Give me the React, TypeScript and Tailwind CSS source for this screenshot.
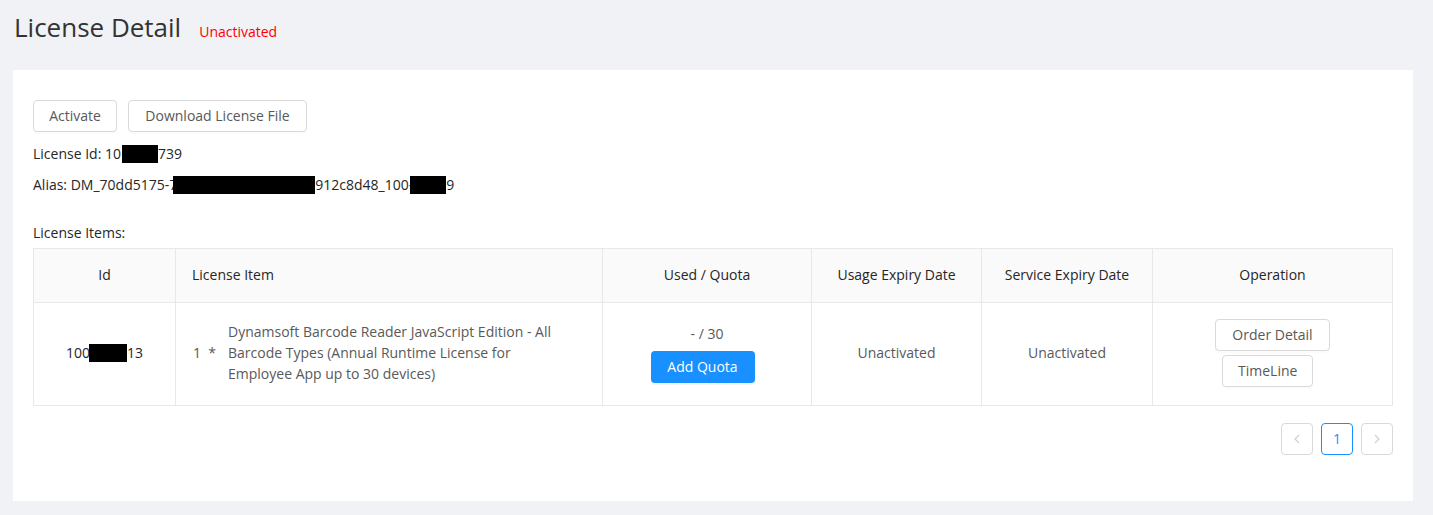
import React from 'react';

const Redact: React.FC<{ w: number; className?: string }> = ({ w, className }) => (
  <span
    className={`inline-block h-[18px] bg-black align-[-4px] ${className ?? ''}`}
    style={{ width: w }}
  />
);

const GhostButton: React.FC<{ children: React.ReactNode; className?: string }> = ({
  children,
  className,
}) => (
  <button
    className={`h-8 rounded border border-[#d9d9d9] bg-white px-[15px] text-sm text-[#595959] shadow-[0_2px_0_rgba(0,0,0,0.015)] ${className ?? ''}`}
  >
    {children}
  </button>
);

export default function App() {
  return (
    <div className="min-h-[515px] bg-[#f0f2f5] font-['Open_Sans',sans-serif] text-sm text-[#595959]">
      <div className="flex h-[70px] items-baseline pl-[14px] pt-[8px]">
        <h1 className="text-[26px] font-normal leading-[38px] text-[#333]">License Detail</h1>
        <span className="ml-[18px] text-sm text-[#ff0000]">Unactivated</span>
      </div>

      <div className="ml-[13px] w-[1400px] bg-white px-5 pb-[46px] pt-[30px]">
        <div className="flex gap-[11px]">
          <GhostButton className="w-[84px]">Activate</GhostButton>
          <GhostButton className="w-[179px]">Download License File</GhostButton>
        </div>

        <div className="mt-[11px] leading-[22px] text-[#262626]">
          License Id: 10
          <Redact w={36} className="ml-[1px]" />
          739
        </div>
        <div className="mt-[9px] leading-[22px] text-[#262626]">
          Alias:{' '}
          <span className="font-medium">
            DM_70dd5175-7
            <Redact w={142} className="-ml-[4px]" />
            912c8d48_100-
            <Redact w={36} className="-ml-[3px]" />
            9
          </span>
        </div>

        <div className="mt-[26px] leading-[22px] text-[#262626]">License Items:</div>

        <table className="mt-[4px] w-[1359px] table-fixed border-collapse border border-[#e8e8e8] text-sm">
          <colgroup>
            <col className="w-[142px]" />
            <col className="w-[427px]" />
            <col className="w-[209px]" />
            <col className="w-[170px]" />
            <col className="w-[171px]" />
            <col className="w-[240px]" />
          </colgroup>
          <thead>
            <tr className="h-[54px] bg-[#fafafa] text-[#262626]">
              <th className="border border-[#e8e8e8] pb-[1px] text-center font-normal">Id</th>
              <th className="border border-[#e8e8e8] pb-[1px] pl-4 text-left font-normal">License Item</th>
              <th className="border border-[#e8e8e8] pb-[1px] text-center font-normal">Used / Quota</th>
              <th className="border border-[#e8e8e8] pb-[1px] text-center font-normal">Usage Expiry Date</th>
              <th className="border border-[#e8e8e8] pb-[1px] text-center font-normal">Service Expiry Date</th>
              <th className="border border-[#e8e8e8] pb-[1px] text-center font-normal">Operation</th>
            </tr>
          </thead>
          <tbody>
            <tr className="h-[103px]">
              <td className="border border-[#e8e8e8] pb-[2px] text-center text-[#262626]">
                100
                <Redact w={38} className="-ml-[1px]" />
                13
              </td>
              <td className="border border-[#e8e8e8] pb-[3px] pl-[17px] pr-4">
                <div className="flex items-center leading-[21px]">
                  <span className="w-[35px] shrink-0">1 &nbsp;*</span>
                  <span className="w-[350px]">
                    Dynamsoft Barcode Reader JavaScript Edition - All Barcode Types (Annual Runtime
                    License for Employee App up to 30 devices)
                  </span>
                </div>
              </td>
              <td className="border border-[#e8e8e8] pb-[3px] text-center">
                <div className="flex flex-col items-center">
                  <span className="leading-[22px]">- / 30</span>
                  <button className="mr-[9px] mt-[6px] h-8 w-[104px] rounded bg-[#1890ff] text-sm text-white shadow-[0_2px_0_rgba(0,0,0,0.045)]">
                    Add Quota
                  </button>
                </div>
              </td>
              <td className="border border-[#e8e8e8] pb-[3px] text-center">Unactivated</td>
              <td className="border border-[#e8e8e8] pb-[3px] text-center">Unactivated</td>
              <td className="border border-[#e8e8e8] pb-[3px] text-center">
                <div className="flex flex-col items-center gap-[4px]">
                  <GhostButton className="w-[115px]">Order Detail</GhostButton>
                  <GhostButton className="mr-[10px] w-[91px]">TimeLine</GhostButton>
                </div>
              </td>
            </tr>
          </tbody>
        </table>

        <div className="mt-[17px] flex w-[1360px] justify-end gap-2">
          <button className="flex h-8 w-8 items-center justify-center rounded border border-[#d9d9d9] text-[#d0d0d0]">
            <svg width="10" height="10" viewBox="0 0 10 10" fill="none" stroke="currentColor" strokeWidth="1.2">
              <path d="M7 1 L3 5 L7 9" />
            </svg>
          </button>
          <button className="flex h-8 w-8 items-center justify-center rounded border border-[#1890ff] text-sm text-[#1890ff]">
            1
          </button>
          <button className="flex h-8 w-8 items-center justify-center rounded border border-[#d9d9d9] text-[#d0d0d0]">
            <svg width="10" height="10" viewBox="0 0 10 10" fill="none" stroke="currentColor" strokeWidth="1.2">
              <path d="M3 1 L7 5 L3 9" />
            </svg>
          </button>
        </div>
      </div>
    </div>
  );
}
